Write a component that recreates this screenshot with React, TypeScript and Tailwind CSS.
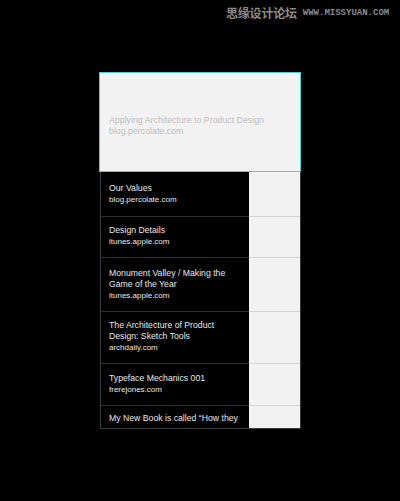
import React from "react";

type Row = { lines: string[]; domain: string; h: string; pt: string };

const rows: Row[] = [
  { lines: ["Our Values"], domain: "blog.percolate.com", h: "h-[45px]", pt: "pt-[11px]" },
  { lines: ["Design Details"], domain: "itunes.apple.com", h: "h-[41px]", pt: "pt-[8px]" },
  { lines: ["Monument Valley / Making the", "Game of the Year"], domain: "itunes.apple.com", h: "h-[54px]", pt: "pt-[10px]" },
  { lines: ["The Architecture of Product", "Design: Sketch Tools"], domain: "archdaily.com", h: "h-[52px]", pt: "pt-[8px]" },
  { lines: ["Typeface Mechanics 001"], domain: "frerejones.com", h: "h-[42px]", pt: "pt-[9px]" },
  { lines: ["My New Book is called \u201CHow they"], domain: "", h: "h-[22px]", pt: "pt-[7px]" },
];

export default function App() {
  return (
    <div
      className="relative w-[400px] h-[501px] bg-black overflow-hidden"
      style={{ fontFamily: '"Liberation Sans", Arial, sans-serif' }}
    >
      <div className="absolute top-[7px] left-[226px] flex items-center gap-[6px] text-[#8a8a8a]">
        <span
          className="text-[12px] leading-[12px] font-bold tracking-[-0.2px]"
          style={{ fontFamily: '"Noto Sans CJK SC", sans-serif' }}
        >
          思缘设计论坛
        </span>
        <span
          className="text-[9px] leading-[12px] font-bold"
          style={{ fontFamily: '"Liberation Mono", monospace' }}
        >
          WWW.MISSYUAN.COM
        </span>
      </div>

      <div className="pt-[72px] pl-[99px] flex flex-col">
        <div className="w-[202px] h-[100px] border border-[#5fc3d6] bg-[#f2f2f2] pt-[42px] pl-[9px] text-[#bdbdbd] text-[8.8px] leading-[11px]">
          <div>Applying Architecture to Product Design</div>
          <div>blog.percolate.com</div>
        </div>
        <div className="ml-[1px] w-[201px] border-l border-r border-b border-[#3a3a3a] flex flex-col">
          {rows.map((r, i) => {
            const last = i === rows.length - 1;
            return (
              <div key={i} className={`flex ${r.h}`}>
                <div
                  className={`flex-1 bg-black pl-[8px] text-[#e8e8e8] overflow-hidden ${r.pt} ${
                    last ? "" : "border-b border-[#2e2e2e]"
                  }`}
                >
                  {r.lines.map((l, j) => (
                    <div key={j} className="text-[8.7px] leading-[11px] whitespace-nowrap">
                      {l}
                    </div>
                  ))}
                  {r.domain && <div className="text-[8px] leading-[11px]">{r.domain}</div>}
                </div>
                <div className={`w-[51px] bg-[#f2f2f2] ${last ? "" : "border-b border-[#d2d2d2]"}`} />
              </div>
            );
          })}
        </div>
      </div>
    </div>
  );
}
